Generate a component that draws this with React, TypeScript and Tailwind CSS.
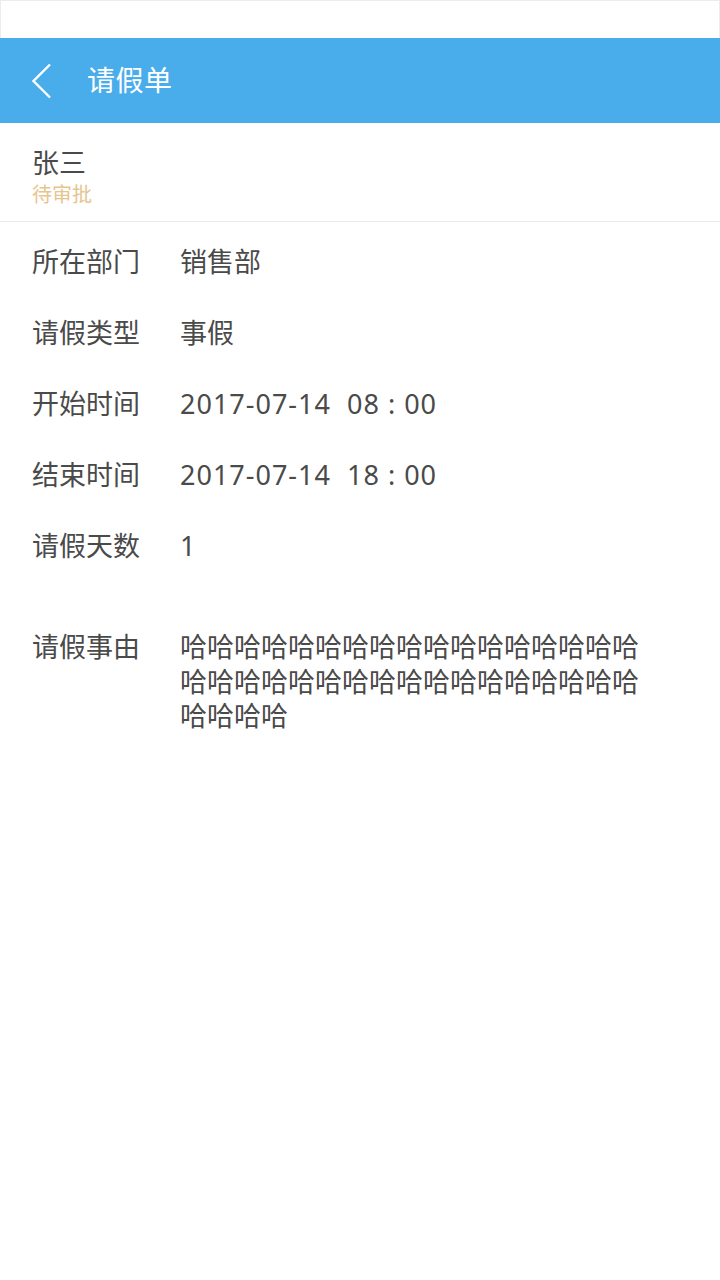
import React from 'react';

const ROWS = [
  { label: '所在部门', value: '销售部', num: false },
  { label: '请假类型', value: '事假', num: false },
  { label: '开始时间', value: '2017-07-14  08 : 00', num: true },
  { label: '结束时间', value: '2017-07-14  18 : 00', num: true },
  { label: '请假天数', value: '1', num: true },
];

const FONT = "font-['Noto_Sans','Noto_Sans_CJK_SC',sans-serif]";

export default function App() {
  return (
    <div className={`w-[720px] min-h-[1280px] bg-white ${FONT}`}>
      {/* status bar */}
      <div className="h-[38px] border border-b-0 border-[#ececec] bg-white" />

      {/* header */}
      <div className="h-[85px] bg-[#4aadeb] flex items-center">
        <button className="w-[87px] h-full flex items-center pl-[31px]">
          <svg width="22" height="36" viewBox="0 0 22 36" fill="none">
            <path d="M19 1.5 L2.5 18 L19 34.5" stroke="white" strokeWidth="2.4" />
          </svg>
        </button>
        <h1 className="text-white text-[28px] leading-none tracking-[0.5px] pb-[2px]">请假单</h1>
      </div>

      {/* applicant */}
      <div className="h-[99px] border-b border-[#ebebeb] pl-[32px] pt-[23px]">
        <p className="text-[27px] leading-[34px] text-[#4a4a4a]">张三</p>
        <p className="text-[20px] leading-[30px] text-[#e6c58e]">待审批</p>
      </div>

      {/* details */}
      <div className="pt-[5px] pl-[32px]">
        {ROWS.map((r) => (
          <div key={r.label} className="h-[71px] flex items-center text-[27px] text-[#4a4a4a]">
            <span className="w-[148px] shrink-0">{r.label}</span>
            <span className={r.num ? 'whitespace-pre tracking-[1px]' : 'whitespace-pre'}>{r.value}</span>
          </div>
        ))}

        <div className="mt-[48px] flex text-[27px] leading-[34.5px] text-[#4a4a4a]">
          <span className="w-[148px] shrink-0">请假事由</span>
          <p className="w-[470px] break-all">
            哈哈哈哈哈哈哈哈哈哈哈哈哈哈哈哈哈哈哈哈哈哈哈哈哈哈哈哈哈哈哈哈哈哈哈哈哈哈
          </p>
        </div>
      </div>
    </div>
  );
}
